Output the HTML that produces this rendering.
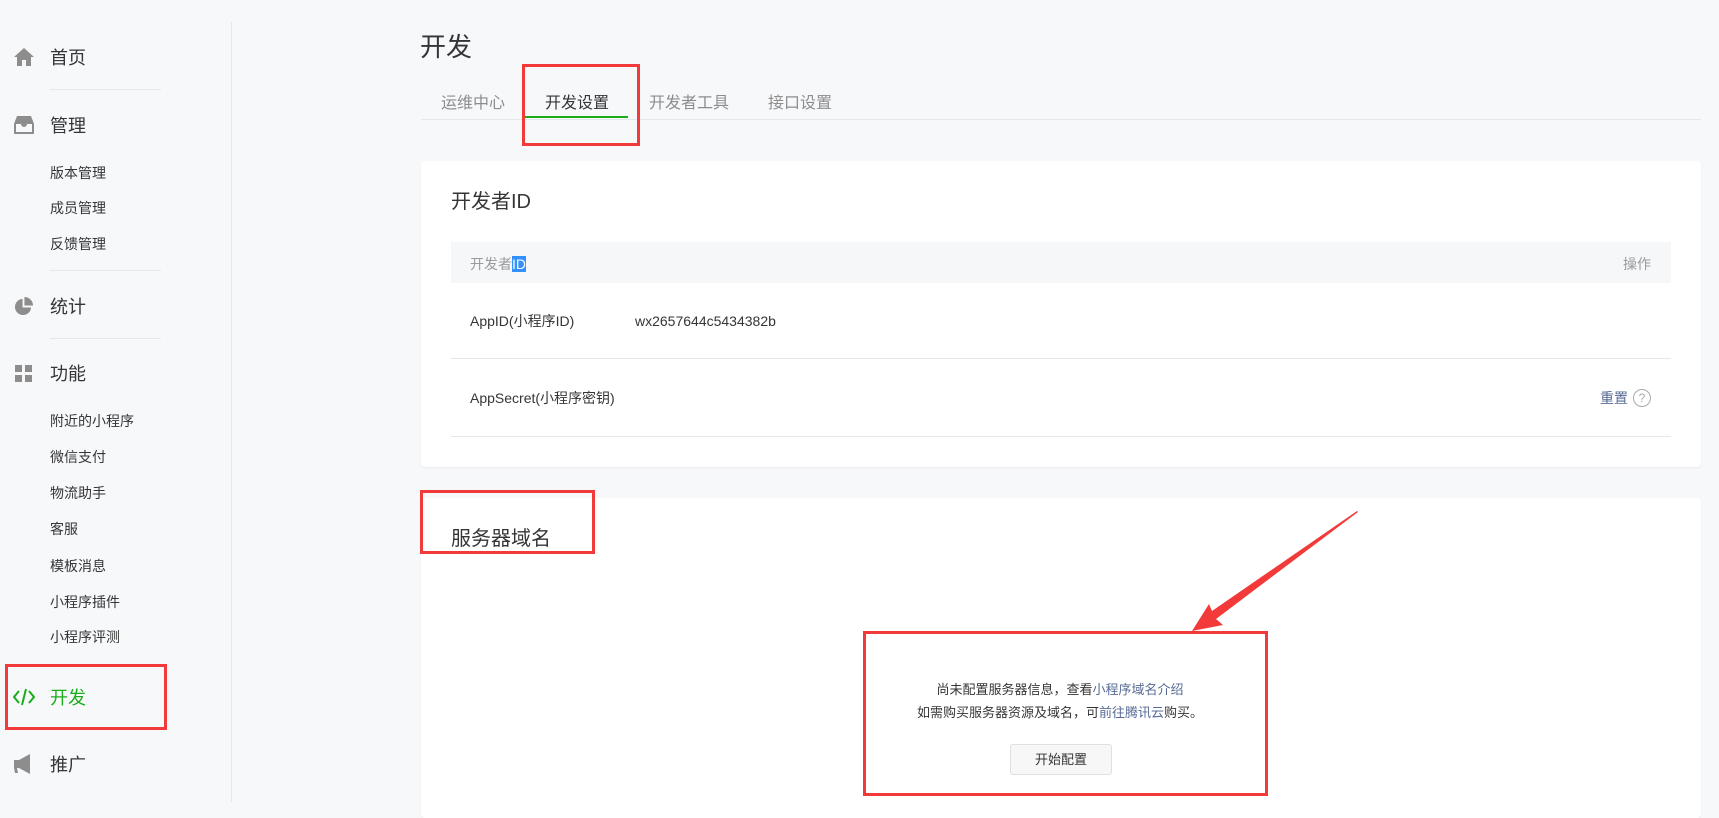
<!DOCTYPE html>
<html><head><meta charset="utf-8"><style>
*{margin:0;padding:0;box-sizing:border-box}
body{width:1719px;height:802px;overflow:hidden;background:#f7f8fa;font-family:"Liberation Sans","Noto Sans CJK SC",sans-serif;color:#353535;position:relative}
.a{position:absolute;white-space:nowrap}
.t{line-height:20px}
.side{position:absolute;left:231px;top:22px;width:1px;height:780px;background:#e7e7eb}
.m{font-size:18px;color:#353535;transform:translateY(-50%)}
.s{font-size:14px;color:#353535;transform:translateY(-50%)}
.hr{position:absolute;left:50px;width:111px;height:1px;background:#e7e7eb}
.card{position:absolute;background:#fff;border-radius:4px;box-shadow:0 1px 2px rgba(0,0,0,.06)}
.rb{position:absolute;border:3px solid #f23a3a}
.lnk{color:#576b95}
</style></head><body>
<div class="side"></div>
<svg class="a" style="left:14px;top:48px" width="20" height="18" viewBox="0 0 20 18"><path d="M10 0L0 9h3v9h5v-6h4v6h5V9h3z" fill="#8d8d8d"/></svg>
<div class="a m" style="left:50px;top:57px">首页</div>
<div class="hr" style="top:89px"></div>
<svg class="a" style="left:14px;top:116px" width="20" height="18" viewBox="0 0 20 18"><path d="M3 0h14l3 8v10H0V8zM2 8v8h16V8h-5a3 3 0 0 1-6 0z" fill="#8d8d8d" fill-rule="evenodd"/></svg>
<div class="a m" style="left:50px;top:125px">管理</div>
<div class="a s" style="left:50px;top:173px">版本管理</div>
<div class="a s" style="left:50px;top:208px">成员管理</div>
<div class="a s" style="left:50px;top:244px">反馈管理</div>
<div class="hr" style="top:270px"></div>
<svg class="a" style="left:14px;top:297px" width="19" height="19" viewBox="0 0 20 20"><path d="M9 2A8.5 8.5 0 1 0 18 11H9z" fill="#8d8d8d"/><path d="M11 0v9h9A9 9 0 0 0 11 0z" fill="#8d8d8d"/></svg>
<div class="a m" style="left:50px;top:306px">统计</div>
<div class="hr" style="top:338px"></div>
<svg class="a" style="left:15px;top:365px" width="17" height="17" viewBox="0 0 17 17"><rect width="7" height="7" fill="#8d8d8d"/><rect x="10" width="7" height="7" fill="#8d8d8d"/><rect y="10" width="7" height="7" fill="#8d8d8d"/><rect x="10" y="10" width="7" height="7" fill="#8d8d8d"/></svg>
<div class="a m" style="left:50px;top:373px">功能</div>
<div class="a s" style="left:50px;top:421px">附近的小程序</div>
<div class="a s" style="left:50px;top:457px">微信支付</div>
<div class="a s" style="left:50px;top:493px">物流助手</div>
<div class="a s" style="left:50px;top:529px">客服</div>
<div class="a s" style="left:50px;top:566px">模板消息</div>
<div class="a s" style="left:50px;top:602px">小程序插件</div>
<div class="a s" style="left:50px;top:637px">小程序评测</div>
<svg class="a" style="left:13px;top:688px" width="22" height="18" viewBox="0 0 22 18"><path d="M6 3L1 9l5 6M16 3l5 6-5 6M13 1L9 17" stroke="#1aad19" stroke-width="2" fill="none"/></svg>
<div class="a m" style="left:50px;top:697px;color:#1aad19">开发</div>
<div class="rb" style="left:5px;top:664px;width:162px;height:66px"></div>
<svg class="a" style="left:14px;top:754px" width="20" height="20" viewBox="0 0 20 20"><path d="M0 6h5l11-6v20L5 14H3l1 5H1L0 14z" fill="#8d8d8d"/></svg>
<div class="a m" style="left:50px;top:764px">推广</div>

<div class="a" style="left:420px;top:27px;font-size:26px;color:#353535">开发</div>
<div class="a" style="left:421px;top:119px;width:1280px;height:1px;background:#e7e7eb"></div>
<div class="a" style="left:441px;top:89px;font-size:16px;color:#8d8d8d">运维中心</div>
<div class="a" style="left:545px;top:89px;font-size:16px;color:#353535">开发设置</div>
<div class="a" style="left:524px;top:116px;width:104px;height:2px;background:#1aad19"></div>
<div class="a" style="left:649px;top:89px;font-size:16px;color:#8d8d8d">开发者工具</div>
<div class="a" style="left:768px;top:89px;font-size:16px;color:#8d8d8d">接口设置</div>
<div class="rb" style="left:522px;top:64px;width:118px;height:82px"></div>

<div class="card" style="left:421px;top:161px;width:1280px;height:306px"></div>
<div class="a" style="left:451px;top:185px;font-size:20px">开发者ID</div>
<div class="a" style="left:451px;top:242px;width:1220px;height:41px;background:#f6f7f9"></div>
<div class="a t" style="left:470px;top:254px;font-size:14px;color:#9a9a9a">开发者<span style="background:#3390ff;color:#fff">ID</span></div>
<div class="a t" style="left:1623px;top:254px;font-size:14px;color:#9a9a9a">操作</div>
<div class="a t" style="left:470px;top:311px;font-size:14px">AppID(小程序ID)</div>
<div class="a t" style="left:635px;top:311px;font-size:14px">wx2657644c5434382b</div>
<div class="a" style="left:451px;top:358px;width:1220px;height:1px;background:#e7e7eb"></div>
<div class="a t" style="left:470px;top:388px;font-size:14px">AppSecret(小程序密钥)</div>
<div class="a t lnk" style="left:1600px;top:388px;font-size:14px">重置</div>
<div class="a" style="left:1633px;top:389px;width:18px;height:18px;border:1px solid #aaa;border-radius:50%;font-size:12px;color:#aaa;text-align:center;line-height:16px">?</div>
<div class="a" style="left:451px;top:436px;width:1220px;height:1px;background:#e7e7eb"></div>

<div class="card" style="left:421px;top:498px;width:1280px;height:320px"></div>
<div class="a" style="left:451px;top:522px;font-size:20px">服务器域名</div>
<div class="rb" style="left:420px;top:490px;width:175px;height:64px"></div>
<div class="a t" style="left:860px;top:680px;width:400px;text-align:center;font-size:13px;color:#353535">尚未配置服务器信息，查看<span class="lnk">小程序域名介绍</span></div>
<div class="a t" style="left:860px;top:703px;width:400px;text-align:center;font-size:13px;color:#353535">如需购买服务器资源及域名，可<span class="lnk">前往腾讯云</span>购买。</div>
<div class="a" style="left:1010px;top:744px;width:102px;height:31px;border:1px solid #e0e0e0;border-radius:3px;background:#f7f7f7;font-size:13px;text-align:center;line-height:29px">开始配置</div>
<div class="rb" style="left:863px;top:631px;width:405px;height:165px"></div>
<svg class="a" style="left:1180px;top:505px" width="185" height="135" viewBox="0 0 185 135"><path d="M177 6L32 106l-3-7-17 27 31-6-7-6L178 7z" fill="#f23a3a"/></svg>
</body></html>
